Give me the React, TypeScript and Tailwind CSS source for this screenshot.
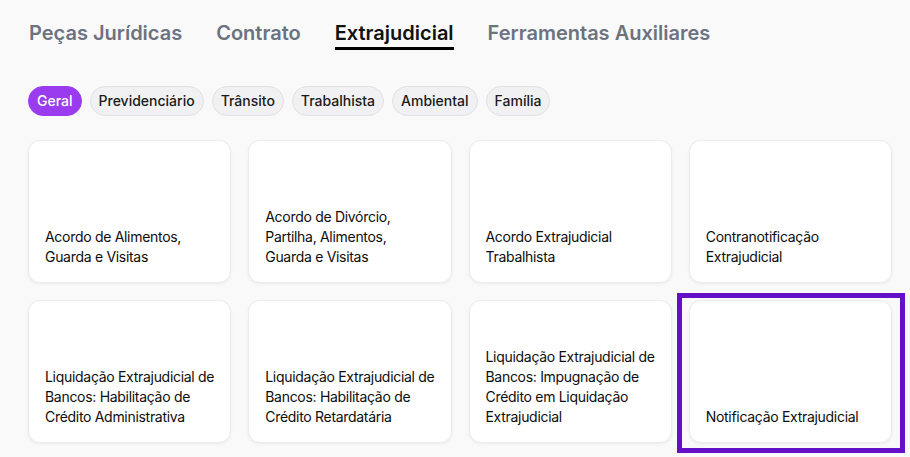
import { useState } from 'react';

const tabs = ['Peças Jurídicas', 'Contrato', 'Extrajudicial', 'Ferramentas Auxiliares'];
const areas = ['Geral', 'Previdenciário', 'Trânsito', 'Trabalhista', 'Ambiental', 'Família'];

const modelos = [
  ['Acordo de Alimentos,', 'Guarda e Visitas'],
  ['Acordo de Divórcio,', 'Partilha, Alimentos,', 'Guarda e Visitas'],
  ['Acordo Extrajudicial', 'Trabalhista'],
  ['Contranotificação', 'Extrajudicial'],
  ['Liquidação Extrajudicial de', 'Bancos: Habilitação de', 'Crédito Administrativa'],
  ['Liquidação Extrajudicial de', 'Bancos: Habilitação de', 'Crédito Retardatária'],
  ['Liquidação Extrajudicial de', 'Bancos: Impugnação de', 'Crédito em Liquidação', 'Extrajudicial'],
  ['Notificação Extrajudicial'],
];

export default function App() {
  const [tab, setTab] = useState('Extrajudicial');
  const [area, setArea] = useState('Geral');

  return (
    <div className="min-h-[457px] bg-[#f9f9f9] pl-[29px] font-['Inter',sans-serif] text-[#111]">
      <nav className="flex gap-[34px] pt-[19px]">
        {tabs.map((t) => (
          <button
            key={t}
            onClick={() => setTab(t)}
            className={
              'border-b-[3px] text-[20px] font-semibold leading-7 ' +
              (t === tab ? 'border-black text-[#111]' : 'border-transparent text-[#6b7280]')
            }
          >
            {t}
          </button>
        ))}
      </nav>

      <div className="-ml-px mt-[36px] flex gap-2">
        {areas.map((a) => (
          <button
            key={a}
            onClick={() => setArea(a)}
            className={
              'rounded-full border px-2 py-1 text-[14px] font-medium leading-5 ' +
              (a === area
                ? 'border-[#9a3bf0] bg-[#9a3bf0] text-white'
                : 'border-[#e2e2e4] bg-[#f1f1f3] text-[#1a1a1a]')
            }
          >
            {a}
          </button>
        ))}
      </div>

      <div className="-ml-px mt-6 grid w-[864px] grid-cols-4 gap-[17px]">
        {modelos.map((linhas, i) => (
          <div
            key={i}
            className="relative flex h-[143px] flex-col justify-end rounded-xl border border-[#ececee] bg-white p-4 pb-[15px] text-[14px] leading-5 tracking-[-0.3px] text-[#0d0d0d] shadow-[0_1px_3px_rgba(0,0,0,0.06)]"
          >
            {linhas.map((l) => (
              <span key={l} className="whitespace-nowrap">
                {l}
              </span>
            ))}
            {i === 7 && (
              <div className="pointer-events-none absolute -top-[8px] -left-[13px] -right-[14px] -bottom-[11px] border-[5px] border-[#6410c8]" />
            )}
          </div>
        ))}
      </div>
    </div>
  );
}
